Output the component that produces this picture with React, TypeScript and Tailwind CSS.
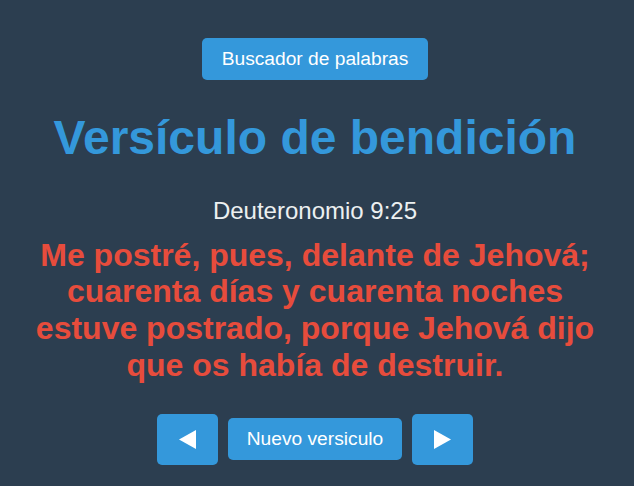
const Arrow = ({ dir }: { dir: "left" | "right" }) => (
  <svg width="17" height="19" viewBox="0 0 17 19" className="block">
    {dir === "left" ? (
      <polygon points="17,0 17,19 0,9.5" fill="#ffffff" />
    ) : (
      <polygon points="0,0 0,19 17,9.5" fill="#ffffff" />
    )}
  </svg>
);

const App = () => (
  <div
    className="flex min-h-[486px] w-full flex-col items-center bg-[#2c3e50] pl-[18px] pr-[22px] pt-[38px] text-center"
    style={{ fontFamily: '"Liberation Sans", Arial, sans-serif' }}
  >
    <button className="h-[42px] rounded-[5px] bg-[#3498db] px-5 text-[19.2px] leading-[22px] text-white">
      Buscador de palabras
    </button>

    <h1 className="mt-[30px] text-[48px] font-bold leading-[55px] text-[#3498db]">
      Versículo de bendición
    </h1>

    <p className="mt-[32px] text-[24px] leading-[27.6px] text-[#ecf0f1]">
      Deuteronomio 9:25
    </p>

    <p className="mt-[12px] w-full text-[32px] font-bold leading-[36.8px] text-[#e74c3c]">
      Me postré, pues, delante de Jehová; cuarenta días y cuarenta noches estuve
      postrado, porque Jehová dijo que os había de destruir.
    </p>

    <div className="mt-[30px] flex items-center gap-[10px]">
      <button className="flex h-[51px] w-[61px] items-center justify-center rounded-[5px] bg-[#3498db]">
        <Arrow dir="left" />
      </button>
      <button className="h-[42px] rounded-[5px] bg-[#3498db] px-[19px] text-[19.2px] leading-[22px] text-white">
        Nuevo versiculo
      </button>
      <button className="flex h-[51px] w-[61px] items-center justify-center rounded-[5px] bg-[#3498db]">
        <Arrow dir="right" />
      </button>
    </div>
  </div>
);

export default App;
